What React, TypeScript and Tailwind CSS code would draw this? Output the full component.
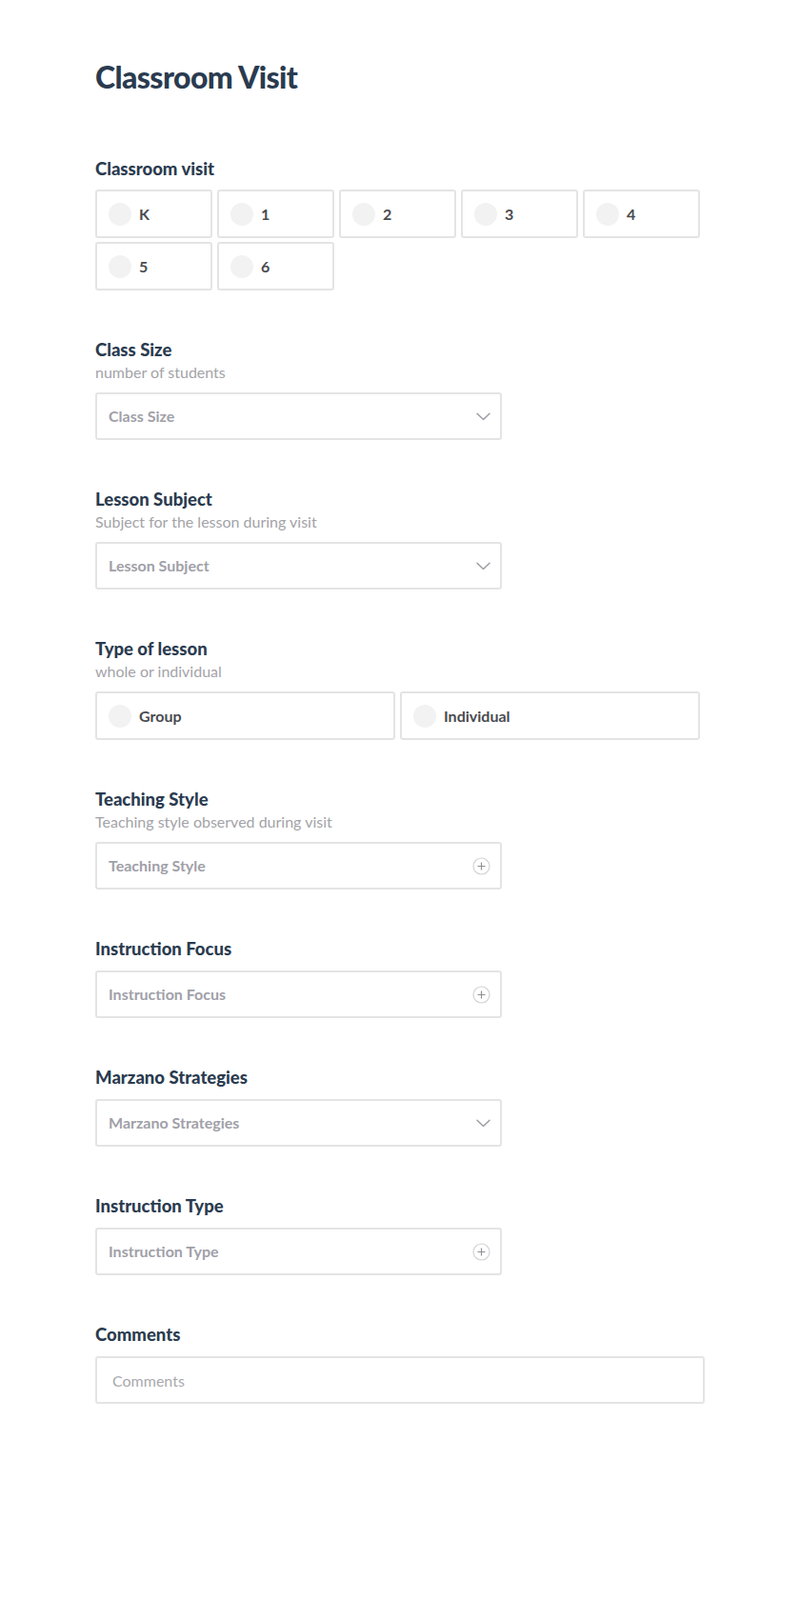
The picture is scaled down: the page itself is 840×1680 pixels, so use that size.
import React from "react";

const Label = ({ title, sub }: { title: string; sub?: string }) => (
  <div>
    <div className="text-[18.5px] leading-[22px] font-black text-[#2a3b4f]">{title}</div>
    {sub && <div className="mt-[3px] text-[16px] leading-[20px] text-[#a3a3a8]">{sub}</div>}
  </div>
);

const Radio = ({ label, className }: { label: string; className: string }) => (
  <div
    className={`${className} h-[51px] flex items-center border-2 border-[#e4e4e4] rounded-[3px] pl-[12px] box-border`}
  >
    <span className="w-[24px] h-[24px] rounded-full bg-[#f2f2f2] shrink-0" />
    <span className="ml-[8px] text-[16px] font-bold text-[#4a4a4f]">{label}</span>
  </div>
);

const Chevron = () => (
  <svg width="15" height="9" viewBox="0 0 15 9" fill="none" className="shrink-0">
    <path d="M1 1.2 L7.5 7.5 L14 1.2" stroke="#9b9ba3" strokeWidth="1.4" strokeLinecap="round" strokeLinejoin="round" />
  </svg>
);

const Plus = () => (
  <svg width="19" height="19" viewBox="0 0 19 19" fill="none" className="shrink-0">
    <circle cx="9.5" cy="9.5" r="8.5" stroke="#d3d3d6" strokeWidth="1.2" />
    <path d="M9.5 5.5 V13.5 M5.5 9.5 H13.5" stroke="#8f8f96" strokeWidth="1.2" />
  </svg>
);

const Select = ({ placeholder, icon }: { placeholder: string; icon: "chevron" | "plus" }) => (
  <div className="w-[427px] h-[50px] flex items-center justify-between border-2 border-[#e4e4e4] rounded-[3px] pl-[12px] pr-[10px] box-border">
    <span className="text-[16px] font-bold text-[#a0a0a8]">{placeholder}</span>
    {icon === "chevron" ? <Chevron /> : <Plus />}
  </div>
);

export default function App() {
  return (
    <div className="min-h-[1680px] bg-white font-['Lato',sans-serif]">
      <div className="w-[640px] mx-auto pt-[62px] pb-[100px]">
        <h1 className="text-[32px] leading-[38px] font-black tracking-[-0.6px] text-[#2a3b4f]">Classroom Visit</h1>

        <div className="mt-[66px]">
          <Label title="Classroom visit" />
          <div className="mt-[11px] flex flex-wrap gap-y-[4px]">
            {["K", "1", "2", "3", "4", "5", "6"].map((g) => (
              <Radio key={g} label={g} className="w-[calc(20%-5px)] mr-[5px]" />
            ))}
          </div>
        </div>

        <div className="mt-[51px]">
          <Label title="Class Size" sub="number of students" />
          <div className="mt-[11px]">
            <Select placeholder="Class Size" icon="chevron" />
          </div>
        </div>

        <div className="mt-[51px]">
          <Label title="Lesson Subject" sub="Subject for the lesson during visit" />
          <div className="mt-[11px]">
            <Select placeholder="Lesson Subject" icon="chevron" />
          </div>
        </div>

        <div className="mt-[51px]">
          <Label title="Type of lesson" sub="whole or individual" />
          <div className="mt-[11px] flex">
            <Radio label="Group" className="w-[calc(50%-5px)] mr-[5px] h-[50px]" />
            <Radio label="Individual" className="w-[calc(50%-5px)] mr-[5px] h-[50px]" />
          </div>
        </div>

        <div className="mt-[51px]">
          <Label title="Teaching Style" sub="Teaching style observed during visit" />
          <div className="mt-[11px]">
            <Select placeholder="Teaching Style" icon="plus" />
          </div>
        </div>

        <div className="mt-[51px]">
          <Label title="Instruction Focus" />
          <div className="mt-[12px]">
            <Select placeholder="Instruction Focus" icon="plus" />
          </div>
        </div>

        <div className="mt-[51px]">
          <Label title="Marzano Strategies" />
          <div className="mt-[12px]">
            <Select placeholder="Marzano Strategies" icon="chevron" />
          </div>
        </div>

        <div className="mt-[51px]">
          <Label title="Instruction Type" />
          <div className="mt-[12px]">
            <Select placeholder="Instruction Type" icon="plus" />
          </div>
        </div>

        <div className="mt-[51px]">
          <Label title="Comments" />
          <div className="mt-[12px]">
            <input
              placeholder="Comments"
              className="w-full h-[50px] border-2 border-[#e4e4e4] rounded-[3px] px-[16px] text-[16px] text-[#333] placeholder:text-[#a9a9ae] outline-none box-border"
            />
          </div>
        </div>
      </div>
    </div>
  );
}
